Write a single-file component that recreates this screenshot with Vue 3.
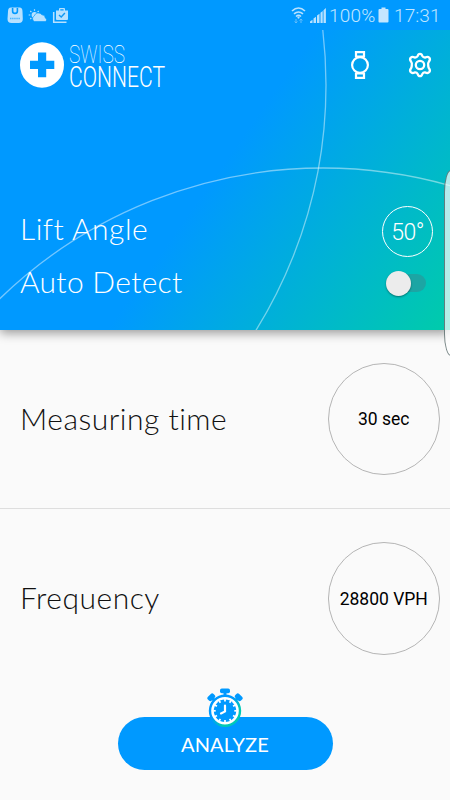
<script setup>
import { ref } from 'vue'

const autoDetect = ref(false)
const settings = [
  { label: 'Measuring time', value: '30 sec', key: 'time' },
  { label: 'Frequency', value: '28800 VPH', key: 'freq' },
]
const ticks = Array.from({ length: 12 }, (_, i) => i * 30)
</script>

<template>
  <main class="screen">
    <div class="status">
      <svg class="status-left" width="64" height="18" viewBox="0 0 64 18">
        <path fill="#b8e1ff" fill-rule="evenodd" d="M4 .5h8.500q3 0 3 4l.3 7.500q0 4-4 4H4.500q-4 0-4-4L1 4.500q0-4 3-4zM4.800 1v3a3.200 3.200 0 0 0 6.400 0V1H9.600v3a1.600 1.600 0 0 1-3.200 0V1z" />
        <path d="M3 11.500h10" stroke="#4ab5ff" stroke-width="1.500" stroke-dasharray="1.500 .6" />
        <circle cx="27.500" cy="8" r="2.900" fill="#b8e1ff" />
        <path d="M27.500 2.200v1.600M23.300 4l1.100 1.100M31.700 4l-1.100 1.100M21.700 8h1.600M23.300 12l1-1" stroke="#b8e1ff" stroke-width="1.200" />
        <path d="M27.500 14.500a3 3 0 0 1-.3-5.500 4.300 4.300 0 0 1 7.700-1.200 3.300 3.300 0 0 1 3.300 3.100 2 2 0 0 1 .3 3.600z" fill="#b8e1ff" stroke="#0099ff" stroke-width=".6" />
        <path d="M46.700 5v10.300H59.500" fill="none" stroke="#b8e1ff" stroke-width="1.500" />
        <path fill="#b8e1ff" fill-rule="evenodd" d="M49 3.500h3V2q0-1 1-1h4q1 0 1 1v1.500h3V12q0 1-1 1H50q-1 0-1-1zM53.300 2.200v1.300h3.300V2.200z" />
        <path d="M52 8l2.200 2 3.700-4" fill="none" stroke="#1298f2" stroke-width="1.400" />
      </svg>
      <div class="status-right">
        <svg width="38" height="18" viewBox="0 0 38 18">
          <g fill="none" stroke="#b8e1ff" stroke-width="1.600">
            <path d="M1 4Q7.500-2 14 4M3 6.900q4.500-3.800 9 0M5 9.500q2.500-2.200 5 0" />
          </g>
          <circle cx="7.500" cy="10.600" r="1.100" fill="#b8e1ff" />
          <path d="M5 12v4M3.600 14.500L5 16l1.400-1.500M10 16v-4M8.600 13.500L10 12l1.400 1.500" fill="none" stroke="#65bdfb" stroke-width="1" />
          <path d="M19 16v-1.500l2.500-1.700V16zM22.500 16v-4.500L25 9.700V16zM26 16V8.500l2.500-1.800V16zM29.500 16V5.800L31.700 4v12zM32.500 16V3.200L34.900 1v15z" fill="#b8e1ff" />
        </svg>
        <span class="percent">100%</span>
        <svg class="battery" width="12" height="16" viewBox="0 0 12 16"><path d="M3.500 2V.5h4V2h2q1 0 1 1v11.500q0 1-1 1h-8q-1 0-1-1V3q0-1 1-1z" fill="#c4e6ff" /></svg>
        <span class="clock">17:31</span>
      </div>
    </div>

    <header class="hero">
      <svg class="arcs" width="450" height="300" viewBox="0 30 450 300">
        <circle cx="-138" cy="85" r="464" />
        <circle cx="323" cy="633" r="465" />
      </svg>
      <div class="topbar">
        <svg class="cross" width="44" height="46" viewBox="0 0 44 46">
          <ellipse cx="22" cy="23" rx="22" ry="22.700" fill="#fff" />
          <path d="M18 10.500h8.200v8.300h8.100V27h-8.100v8.300H18V27h-8v-8.200h8z" fill="#0099ff" />
        </svg>
        <svg class="wordmark" width="98" height="48" viewBox="0 0 98 48">
          <text class="swiss" x="0" y="20.800" textLength="56" lengthAdjust="spacingAndGlyphs">SWISS</text>
          <text class="connect" x="0" y="44.500" textLength="96" lengthAdjust="spacingAndGlyphs">CONNECT</text>
        </svg>
        <svg class="watch" width="20" height="28" viewBox="0 0 20 28" fill="none" stroke="#fff" stroke-width="2.200">
          <circle cx="10" cy="14" r="7.900" />
          <path d="M6 6.500V1.100h8v5.400M6 21.500v5.400h8v-5.400M6 5.500h8M6 22.500h8" />
        </svg>
        <svg class="gear" width="26" height="28" viewBox="0 0 26 28" fill="none" stroke="#fff" stroke-width="2.300" stroke-linejoin="round">
          <path d="M13 2.800q1.800 0 2.300 2.200 1 1.700 3 1.500 2.600-1.200 4 .2 1.400 2-.4 3.900-1.200 1.600-.7 3.400-.1 1.700.7 3.200 1.800 1.900.4 3.900-1.400 1.600-4 .4-2-.3-3 1.500-.5 2.200-2.300 2.200t-2.300-2.200q-1-1.800-3-1.500-2.600 1.200-4-.4-1.400-2 .4-3.900.8-1.500.7-3.200.5-1.800-.7-3.400-1.800-1.900-.4-3.900 1.400-1.400 4-.2 2 .2 3-1.500.5-2.200 2.300-2.200z" />
          <circle cx="13" cy="14" r="4.200" />
        </svg>
      </div>
      <div class="row lift">
        <span class="label lift-label">Lift Angle</span>
        <button class="angle">50°</button>
      </div>
      <div class="row auto">
        <span class="label auto-label">Auto Detect</span>
        <button class="switch" :class="{ on: autoDetect }" role="switch" :aria-checked="autoDetect" @click="autoDetect = !autoDetect">
          <span class="thumb"></span>
        </button>
      </div>
    </header>

    <section v-for="s in settings" :key="s.key" class="setting" :class="s.key">
      <span class="label">{{ s.label }}</span>
      <button class="dial">{{ s.value }}</button>
    </section>

    <footer class="footer">
      <button class="analyze">ANALYZE</button>
      <svg class="stopwatch" width="36" height="40" viewBox="0 0 36 40">
        <defs>
          <linearGradient id="ring" x1="0" y1="0" x2="1" y2="1">
            <stop offset=".4" stop-color="#0099ff" />
            <stop offset=".7" stop-color="#00c9b5" />
          </linearGradient>
        </defs>
        <g fill="#0099ff">
          <rect x="13" y=".4" width="10" height="4.800" rx="1.800" />
          <rect x="16.500" y="4" width="3" height="4" />
          <g transform="rotate(-45 4.500 9.500)"><rect x=".5" y="6.500" width="8" height="5.400" rx="2" /><rect x="3" y="11" width="3" height="3" /></g>
          <g transform="rotate(45 31.500 9.500)"><rect x="27.500" y="6.500" width="8" height="5.400" rx="2" /><rect x="30" y="11" width="3" height="3" /></g>
        </g>
        <circle cx="18" cy="22.800" r="15" fill="#fff" stroke="url(#ring)" stroke-width="2.400" />
        <circle cx="18" cy="22.800" r="11.200" fill="#0099ff" />
        <path v-for="t in ticks" :key="t" :transform="`rotate(${t} 18 22.800)`" d="M18 11v2.500" stroke="#fff" stroke-width="1.700" />
        <path d="M18 17.500v5.900l-4 2" fill="none" stroke="#fff" stroke-width="2.200" stroke-linecap="round" />
      </svg>
    </footer>

    <div class="edge-handle"></div>
  </main>
</template>

<style>
body {
  margin: 0;
  background: #fafafa;
}
</style>

<style scoped>
.screen {
  position: relative;
  display: flex;
  flex-direction: column;
  width: 450px;
  height: 800px;
  overflow: hidden;
  background: #fafafa;
  font-family: Lato, sans-serif;
}
button {
  padding: 0;
  border: 0;
  background: none;
  font: inherit;
}
.status {
  position: relative;
  z-index: 1;
  display: flex;
  justify-content: space-between;
  box-sizing: border-box;
  height: 30px;
  padding: 7px 10px 0 7px;
  background: #0099ff;
  color: #c2e6ff;
  font: 300 19px/18px Roboto, sans-serif;
}
.status-right {
  display: flex;
}
.percent {
  width: 48px;
  margin-left: 0;
  letter-spacing: 0.2px;
  white-space: nowrap;
}
.battery {
  margin-left: 1px;
}
.clock {
  width: 46px;
  margin-left: 4px;
  letter-spacing: 0.1px;
  white-space: nowrap;
}
.hero {
  position: relative;
  height: 300px;
  background: linear-gradient(125deg, #0099ff 48%, #00ccaa 100%);
  box-shadow: 0 3px 10px rgba(0, 0, 0, 0.4);
  color: #fff;
}
.arcs {
  position: absolute;
  inset: 0;
  fill: none;
  stroke: rgba(255, 255, 255, 0.45);
  stroke-width: 1.3;
}
.topbar {
  position: relative;
  display: flex;
  height: 60px;
  padding: 12px 17px 0 20px;
}
.wordmark {
  margin-left: 5px;
  overflow: visible;
  fill: #fff;
  font-family: Roboto, sans-serif;
}
.swiss {
  font-size: 26.5px;
  font-weight: 100;
}
.connect {
  font-size: 29px;
  font-weight: 300;
}
.watch {
  margin: 9px 0 0 auto;
}
.gear {
  margin: 9px 0 0 37px;
}
.row {
  position: relative;
  display: flex;
  align-items: center;
  justify-content: space-between;
}
.label {
  padding-bottom: 3px;
  font-size: 30px;
  font-weight: 300;
  font-variant-ligatures: none;
  line-height: 36px;
  letter-spacing: 0.5px;
  white-space: nowrap;
}
.lift {
  height: 52px;
  margin-top: 103px;
  padding: 0 17px 0 20px;
}
.lift-label {
  padding-bottom: 6px;
  letter-spacing: 0.5px;
}
.auto-label {
  padding-bottom: 4px;
  letter-spacing: 0.3px;
}
.angle {
  box-sizing: border-box;
  width: 51px;
  height: 51px;
  padding-top: 2px;
  border: 1.5px solid #fff;
  border-radius: 50%;
  color: #fff;
  font: 300 23px/48px Roboto, sans-serif;
  letter-spacing: -0.5px;
}
.auto {
  height: 52px;
  padding: 0 24px 0 20px;
}
.switch {
  display: flex;
  align-items: center;
  width: 40px;
  height: 18px;
  border-radius: 9px;
  background: #1ca5a4;
}
.thumb {
  width: 25px;
  height: 25px;
  border-radius: 50%;
  background: #ececec;
  box-shadow: 0 1px 2px rgba(0, 0, 0, 0.4);
}
.switch.on {
  justify-content: flex-end;
}
.setting {
  display: flex;
  align-items: center;
  justify-content: space-between;
  box-sizing: border-box;
  height: 179px;
  padding: 0 10px 0 20px;
  color: #111;
}
.setting.time {
  border-bottom: 1px solid #dedede;
}
.freq .label {
  padding-bottom: 4px;
}
.dial {
  box-sizing: border-box;
  width: 112.5px;
  height: 112.5px;
  border: 1px solid #b5b5b5;
  border-radius: 50%;
  color: #000;
  font: 400 17.5px/20px Roboto, sans-serif;
}
.footer {
  position: relative;
  display: flex;
  justify-content: center;
  padding-top: 29px;
}
.analyze {
  width: 215px;
  height: 53px;
  border-radius: 27px;
  background: #0099ff;
  color: #fff;
  font-size: 20px;
  line-height: 54px;
  letter-spacing: 0.2px;
}
.stopwatch {
  position: absolute;
  top: 0;
  left: 207px;
}
.edge-handle {
  position: absolute;
  top: 170px;
  right: -8px;
  box-sizing: border-box;
  width: 14px;
  height: 186px;
  border: 1px solid rgba(60, 80, 80, 0.7);
  border-radius: 7px / 22px;
  background: rgba(255, 255, 255, 0.7);
}
</style>
